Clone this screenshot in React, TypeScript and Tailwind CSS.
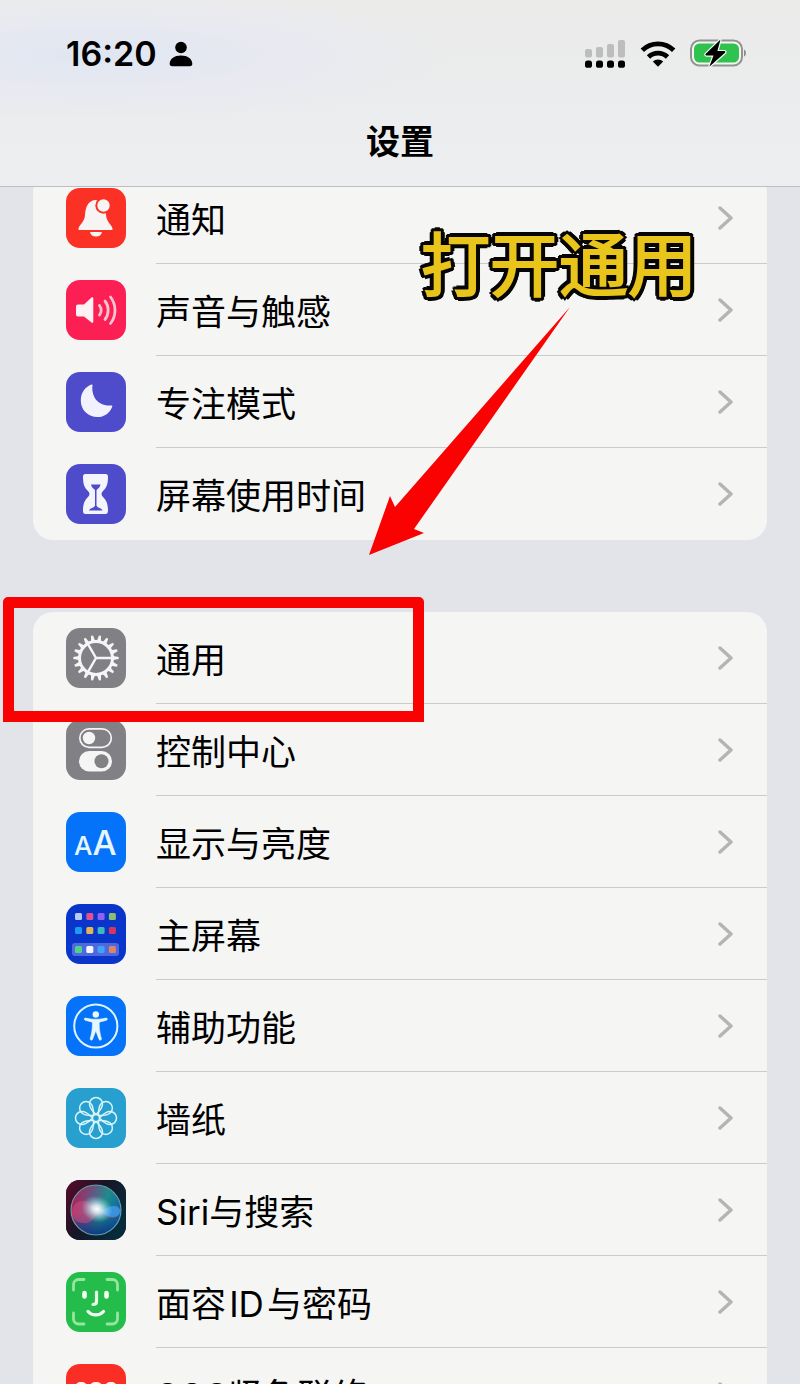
import type { ReactNode } from "react";

type Item = {
  label: string;
  bg: string;
  icon: ReactNode;
  marked?: boolean;
};

const BellIcon = (
  <>
    <path
      d="M29 12c-7 1-9.500 7-10 15-.4 7-5.500 9.500-6.500 13.500-.3 1 .2 1.500 1 1.500h32c.8 0 1.300-.5 1-1.500-1-4-6-6.500-6.500-13.500-.5-9-3-14-11-15z"
      fill="#F7F5F4"
    />
    <path d="M24 44h12c-.5 3-3 4.500-6 4.500s-5.500-1.500-6-4.500z" fill="#F7F5F4" />
    <circle cx="37.500" cy="17.500" r="7.200" fill="#F7F5F4" stroke="#FC3126" strokeWidth="2" />
  </>
);

const SpeakerIcon = (
  <>
    <path
      d="M12 24.500h6l7.500-7c.8-.7 1.800-.3 1.800.8v23.400c0 1.100-1 1.500-1.800.8l-7.500-6h-6c-1.200 0-2-.8-2-2v-8c0-1.200.8-2 2-2z"
      fill="#FDF1F4"
    />
    <g fill="none" stroke="#FFC4D2" strokeWidth="2.800" strokeLinecap="round">
      <path d="M33.500 25.500c2 2.800 2 6.700 0 9.500" />
      <path d="M39 21c4.200 5.200 4.200 13.300 0 18.500" />
      <path d="M44.500 17c6 7.500 6 19 0 26.500" />
    </g>
  </>
);

const MoonIcon = (
  <path
    d="M26.500 13.300c-1.500 10.500 5 21.500 19 20.200.7 0 1 .5.700 1.200C43.500 41.500 38 45 31.500 45 22 45 14.800 38 14.800 28.500c0-7.500 4.200-13.500 10.700-15.900.7-.3 1.100 0 1 .7z"
    fill="#F1F2FD"
  />
);

const HourglassIcon = (
  <>
    <path
      d="M19.500 10h20c1.600 0 2.500 1 2.500 2.500 0 8-1.500 11-5 14.500-2 2-2 4 0 6 3.500 3.500 5 7 5 14 0 2-1 3-2.500 3h-20c-1.600 0-2.500-1-2.500-3 0-7 1.500-10.500 5-14 2-2 2-4 0-6-3.500-3.500-5-6.500-5-14.500 0-1.500.9-2.500 2.500-2.500z"
      fill="#F4F4FD"
    />
    <path
      d="M25 20.500h9.500c-.5 2-1.500 3.500-3 4.500-.7.500-1 1-1 2v14c0 1 .5 1.700 1.500 2.200 2.500 1 4 2 4.500 3.300H23c.5-1.300 2-2.300 4.500-3.300 1-.5 1.500-1.200 1.500-2.200V27c0-1-.3-1.500-1-2-1.500-1-2.500-2.500-3-4.500z"
      fill="#4E4CCB"
    />
  </>
);

const TEETH = Array.from({ length: 18 }, (_, i) => i * 20);

const GearIcon = (
  <g stroke="#F5F5F7" fill="none">
    <circle cx="30" cy="30" r="16.500" strokeWidth="3" />
    {TEETH.map((a) => (
      <path key={a} d="M46 27.700l6.700 1.300v2L46 32.300z" fill="#F5F5F7" stroke="none" transform={`rotate(${a} 30 30)`} />
    ))}
    <path d="M30 30h16M30 30l-8-13.900M30 30l-8 13.900" strokeWidth="2.500" />
  </g>
);

const ControlIcon = (
  <>
    <rect x="13.800" y="8.800" width="31.500" height="18.600" rx="9.300" fill="none" stroke="#F5F5F5" strokeWidth="1.700" />
    <circle cx="23" cy="18" r="6.200" fill="#F5F5F5" />
    <rect x="13" y="31" width="33" height="20.500" rx="10.250" fill="#F5F5F5" />
    <circle cx="35.500" cy="41.200" r="7" fill="#818185" />
  </>
);

const DisplayIcon = (
  <g fill="#E6F6FF" fontFamily="Inter, sans-serif" fontWeight="500">
    <text x="8" y="42.500" fontSize="26">A</text>
    <text x="26.500" y="42.500" fontSize="34">A</text>
  </g>
);

const APPS = [
  ["#B9C8F5", "#E1508F", "#8F62F2", "#8DC06B"],
  ["#1E9BF0", "#E6B453", "#3DB8BE", "#D6365E"],
  ["#4FD38A", "#F3F7FF", "#3FA4F5", "#E08468"],
];
const APP_Y = [9, 23, 42];

const HomeIcon = (
  <>
    <rect x="6" y="39" width="47" height="13" rx="3" fill="#4E69DD" />
    {APPS.map((row, r) =>
      row.map((c, i) => (
        <rect key={c} x={9 + i * 11.3} y={APP_Y[r]} width="7" height="7" rx="1.500" fill={c} />
      ))
    )}
  </>
);

const AccessIcon = (
  <>
    <circle cx="29.800" cy="30" r="21.600" fill="none" stroke="#DDF4FF" strokeWidth="2" />
    <circle cx="29.800" cy="18.500" r="3.200" fill="#E6F7FF" />
    <path
      d="M19.500 22c3.500 1 7 1.200 10.300 1.200s6.800-.2 10.300-1.200c1.400-.2 1.700 1.800.4 2.300l-6.500 1.700c-.6.200-.8.600-.8 1.200 0 6 .5 9 2.200 15.400.4 1.500-1.600 2.200-2.300.9l-3.300-8.700-3.300 8.700c-.7 1.300-2.700.6-2.300-.9 1.700-6.400 2.200-9.400 2.200-15.400 0-.6-.2-1-.8-1.200l-6.500-1.700c-1.300-.5-1-2.500.4-2.300z"
      fill="#E6F7FF"
      stroke="#E6F7FF"
      strokeWidth=".6"
    />
  </>
);

const PETALS = [0, 45, 90, 135, 180, 225, 270, 315];

const WallpaperIcon = (
  <g fill="none" stroke="#D9F6FC" strokeWidth="1.500">
    {PETALS.map((a) => (
      <path
        key={a}
        d="M30 26.500c-3.500-3.500-6.500-6-6.500-10.500a6.500 6.500 0 0 1 13 0c0 4.500-3 7-6.500 10.500z"
        transform={`rotate(${a} 30 30)`}
      />
    ))}
    <circle cx="30" cy="30" r="3.500" strokeWidth="1.300" />
  </g>
);

const SiriIcon = (
  <>
    <defs>
      <linearGradient id="siri-bg" x1="0" y1="0" x2="1" y2="0.600">
        <stop offset="0" stopColor="#5B0A2A" />
        <stop offset="0.500" stopColor="#171525" />
        <stop offset="1" stopColor="#062B3B" />
      </linearGradient>
      <linearGradient id="siri-orb" x1="0" y1="0.300" x2="1" y2="0.600">
        <stop offset="0" stopColor="#B01F58" />
        <stop offset="0.400" stopColor="#5C5C86" />
        <stop offset="0.650" stopColor="#1F8C8B" />
        <stop offset="1" stopColor="#0E5FA8" />
      </linearGradient>
      <linearGradient id="siri-shade" x1="0" y1="0" x2="0" y2="1">
        <stop offset="0.550" stopColor="#0B2B6B" stopOpacity="0" />
        <stop offset="1" stopColor="#0A2C88" stopOpacity="0.850" />
      </linearGradient>
      <radialGradient id="siri-glow">
        <stop offset="0" stopColor="#FFFFFF" />
        <stop offset="0.300" stopColor="#E9FBFF" stopOpacity="0.800" />
        <stop offset="1" stopColor="#8FE5E8" stopOpacity="0" />
      </radialGradient>
    </defs>
    <rect width="60" height="60" fill="url(#siri-bg)" />
    <circle cx="30" cy="30" r="25" fill="url(#siri-orb)" />
    <circle cx="30" cy="30" r="25" fill="url(#siri-shade)" />
    <path d="M6 33c0-9 7-13 12-12 7 1 9 7 17 9 6 1 9-4 14-4 3 0 5 2 5 5 0 6-6 8-12 6-6-3-8-5-12-1-3 4-7 8-13 7-6 0-11-4-11-10z" fill="#E0487F" fillOpacity="0.500" />
    <path d="M32 30c7 1 10-5 16-4 4 0 6 3 6 5 0 6-7 7-12 5-4-1-6-4-10-6z" fill="#2E9BEA" fillOpacity="0.850" />
    <ellipse cx="31" cy="29" rx="16" ry="13" fill="url(#siri-glow)" transform="rotate(20 31 29)" />
    <circle cx="30" cy="30" r="25" fill="none" stroke="#6FB6B5" strokeOpacity="0.800" strokeWidth="1.200" />
  </>
);

const FaceIcon = (
  <g fill="none" strokeLinecap="round" strokeLinejoin="round">
    <path
      d="M7.500 18v-5.500a5 5 0 0 1 5-5H18M41 7.500h5.500a5 5 0 0 1 5 5V18M51.500 41v6a5 5 0 0 1-5 5H41M18 52h-5.500a5 5 0 0 1-5-5v-6"
      stroke="#97E59F"
      strokeWidth="2.800"
    />
    <path d="M18.500 21v3.500M40.500 21v3.500" stroke="#F2FFF2" strokeWidth="4.600" />
    <path d="M30.500 20v9.500c0 2-1 3-3.500 3" stroke="#E4FBE4" strokeWidth="3.200" />
    <path d="M22 39.500c4 4.500 11.500 4.500 15.500 0" stroke="#F2FFF2" strokeWidth="3.200" />
  </g>
);

const SosIcon = (
  <text x="30" y="34" textAnchor="middle" fontSize="21" fontWeight="700" fontFamily="Inter, sans-serif" fill="#FFF1F0">
    SOS
  </text>
);

const ALERTS: Item[] = [
  { label: "通知", bg: "bg-[#fc3126]", icon: BellIcon },
  { label: "声音与触感", bg: "bg-[#fb1f54]", icon: SpeakerIcon },
  { label: "专注模式", bg: "bg-[#4e4ccb]", icon: MoonIcon },
  { label: "屏幕使用时间", bg: "bg-[#4e4ccb]", icon: HourglassIcon },
];

const SYSTEM: Item[] = [
  { label: "通用", bg: "bg-[#818185]", icon: GearIcon, marked: true },
  { label: "控制中心", bg: "bg-[#818185]", icon: ControlIcon },
  { label: "显示与亮度", bg: "bg-[#0572fa]", icon: DisplayIcon },
  { label: "主屏幕", bg: "bg-[#0a35cb]", icon: HomeIcon },
  { label: "辅助功能", bg: "bg-[#0572fa]", icon: AccessIcon },
  { label: "墙纸", bg: "bg-[#279fcf]", icon: WallpaperIcon },
  { label: "Siri与搜索", bg: "bg-[#171525]", icon: SiriIcon },
  { label: "面容\u200aID\u200a与密码", bg: "bg-[#24bd4b]", icon: FaceIcon },
  { label: "SOS紧急联络", bg: "bg-[#fb2e25]", icon: SosIcon },
];

function Row({ label, bg, icon, marked }: Item) {
  return (
    <li className="group relative">
      <button type="button" className="flex h-[92px] w-full items-center gap-[30px] pl-[33px] text-left">
        <span className={`size-15 shrink-0 overflow-hidden rounded-[14px] ${bg}`}>
          <svg viewBox="0 0 60 60" className="size-full" aria-hidden>
            {icon}
          </svg>
        </span>
        <span className="flex h-full grow items-center justify-between border-b border-[#cbcbcc] pr-[34px] group-last:border-transparent">
          <span className="pt-1 text-[35px] leading-10">{label}</span>
          <svg viewBox="0 0 16 26" className="h-[26px] w-4 shrink-0" fill="none" aria-hidden>
            <path d="M3 3l11 10L3 23" stroke="#B4B4B5" strokeWidth="3.400" strokeLinecap="round" strokeLinejoin="round" />
          </svg>
        </span>
      </button>

      {/* red frame round the row to tap */}
      {marked && (
        <span
          aria-hidden
          className="pointer-events-none absolute -top-[15px] -left-[30px] z-10 h-[125px] w-[421px] rounded-t-[5px] border-[11px] border-[#f90204]"
        />
      )}
    </li>
  );
}

function Group({ items, children }: { items: Item[]; children?: ReactNode }) {
  return (
    <section className="relative mx-[33px] rounded-[20px] bg-[#f5f5f4]">
      <ul>
        {items.map((item) => (
          <Row key={item.label} {...item} />
        ))}
      </ul>
      {children}
    </section>
  );
}

function StatusBar() {
  return (
    <div className="flex h-27 items-center justify-between pr-[54px] pl-[66px]">
      <div className="flex items-center gap-3">
        <span className="font-[Inter] text-[34px] leading-10 font-semibold">16:20</span>
        <svg viewBox="0 0 24 26" className="h-[26px] w-6" aria-hidden>
          <circle cx="12" cy="6.500" r="5.800" />
          <path d="M.7 22.500C1 17.500 5.500 14.500 12 14.500s11 3 11.300 8c.1 1.700-.8 2.700-2.500 2.700H3.200c-1.700 0-2.600-1-2.500-2.700z" />
        </svg>
      </div>

      <div className="flex items-center gap-3">
        <svg viewBox="0 0 44 28" className="h-7 w-11" aria-hidden>
          <g fill="#BDBDBD">
            <rect x="1" y="9" width="7" height="8.500" rx="2" />
            <rect x="12" y="7" width="7" height="10.500" rx="2" />
            <rect x="23" y="4" width="7" height="13.500" rx="2" />
            <rect x="34" y="0" width="7" height="17.500" rx="2" />
          </g>
          <rect x="1" y="20.500" width="7" height="7.300" rx="2.600" />
          <rect x="12" y="20.500" width="7" height="7.300" rx="2.600" />
          <rect x="23" y="20.500" width="7" height="7.300" rx="2.600" />
          <rect x="34" y="20.500" width="7" height="7.300" rx="2.600" />
        </svg>
        <svg viewBox="0 0 36 27" className="h-[27px] w-9" aria-hidden>
          <g fill="none" stroke="#000" strokeWidth="4.800">
            <path d="M2.300 9.200a22.500 22.500 0 0 1 31.400 0" />
            <path d="M8.500 16a13.600 13.600 0 0 1 19 0" />
          </g>
          <path d="M12.800 20.600a7.500 7.500 0 0 1 10.400 0L18 25.800z" />
        </svg>
        <svg viewBox="0 0 58 30" className="h-[30px] w-[58px]" aria-hidden>
          <rect x="3" y="1.500" width="51" height="25" rx="8.500" fill="#F4F6F4" stroke="#929292" strokeWidth="2" />
          <rect x="6" y="4.500" width="45" height="19" rx="5.500" fill="#2FC24E" />
          <path d="M56 10.500c2.500.8 2.500 6.200 0 7z" fill="#8A8A8A" />
          <path
            d="M32.500.5L17.800 14.800c-.7.700-.4 1.700.6 1.700h7.100l-4.200 11.300L37 13.800c.7-.7.400-1.700-.6-1.700h-7z"
            stroke="#F2FBF2"
            strokeWidth="2.400"
            paintOrder="stroke"
          />
        </svg>
      </div>
    </div>
  );
}

export default function App() {
  return (
    <main className="flex h-screen flex-col overflow-hidden bg-[#e3e4e9] font-[Inter,'Noto_Sans_CJK_SC',sans-serif] text-black">
      <header className="z-20 shrink-0 border-b border-[#bdbec1] bg-[#ecedee] bg-[radial-gradient(ellipse_at_12%_30%,#dfe6f1_0%,#e8e9f1_18%,transparent_36%),linear-gradient(to_bottom,#ebebea,#ebeced_50%,#eceeef)]">
        <StatusBar />
        <div className="mb-2.5 flex h-17 items-center justify-center">
          <h1 className="text-[34px] leading-10 font-bold">设置</h1>
        </div>
      </header>

      {/* list is scrolled so its first card sits partly under the header */}
      <div className="-mt-[15px] flex flex-col gap-18">
        <Group items={ALERTS}>
          {/* dark outline comes from the ring of shadows */}
          <p className="pointer-events-none absolute top-[54px] left-[388px] text-[69px] leading-20 font-normal whitespace-nowrap text-[#e9c51c] [-webkit-text-stroke:2px_#e9c51c] [text-shadow:5px_0_#080604,-5px_0_#080604,0_5px_#080604,0_-5px_#080604,4px_3px_#080604,-4px_3px_#080604,4px_-3px_#080604,-4px_-3px_#080604,3px_4px_#080604,-3px_4px_#080604,3px_-4px_#080604,-3px_-4px_#080604]">
            打开通用
          </p>
          <svg
            viewBox="0 0 202 250"
            className="pointer-events-none absolute top-[134px] left-[336px] z-10 h-[250px] w-[202px]"
            aria-hidden
          >
            <path d="M201 1L45 223l10 4L0 249l21-59 5 11z" fill="#FB0202" />
          </svg>
        </Group>
        <Group items={SYSTEM} />
      </div>
    </main>
  );
}
